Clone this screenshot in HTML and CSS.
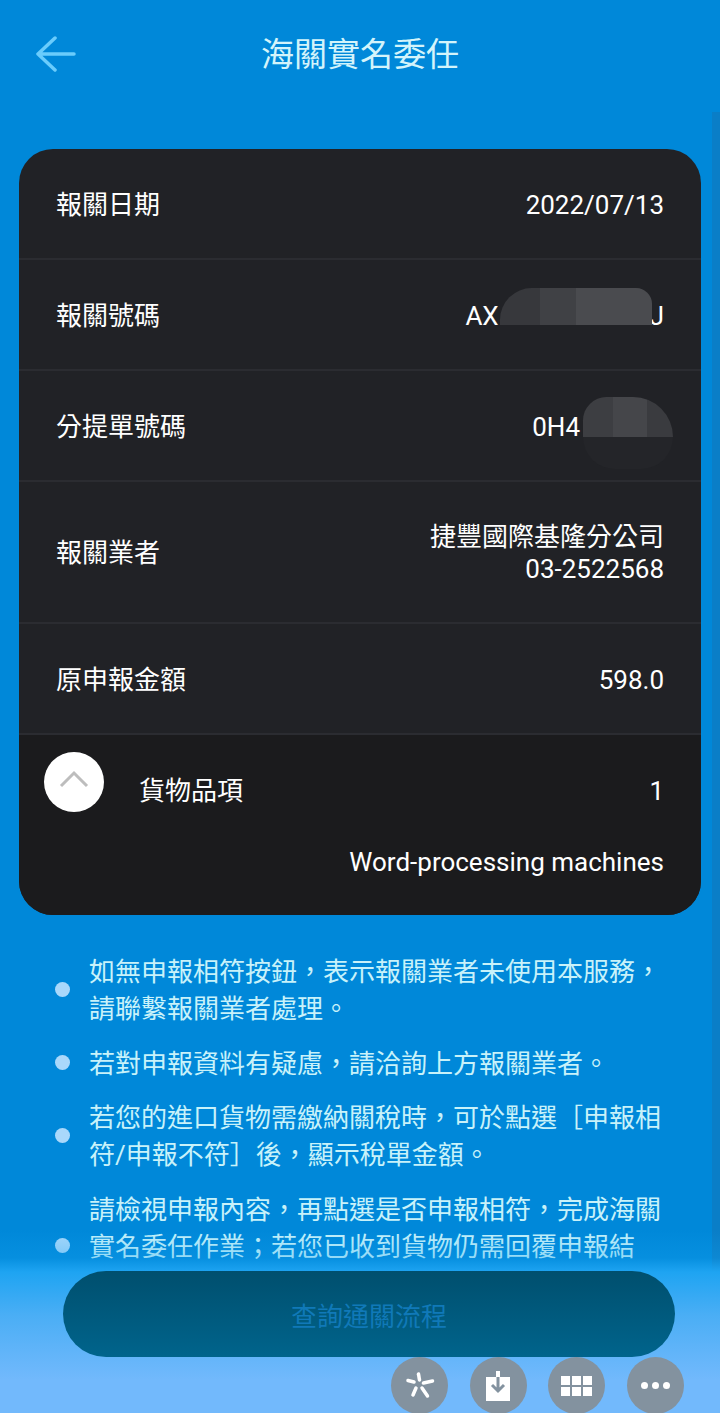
FILE: index.html
```html
<!DOCTYPE html>
<html lang="zh-Hant">
<head>
  <meta charset="UTF-8">
  <title>海關實名委任</title>
  <link rel="stylesheet" href="styles.css">
</head>
<body>
  <div class="page">

    <!-- Header -->
    <header class="topbar">
      <svg class="back-icon" width="42" height="36" viewBox="0 0 42 36" fill="none">
        <path d="M20 2 L3 18 L20 34 M3 18 H39" stroke="#6accfc" stroke-width="3.5" stroke-linecap="round" stroke-linejoin="round"/>
      </svg>
      <h1>海關實名委任</h1>
    </header>

    <div class="scroll-track"></div>

    <!-- Declaration details -->
    <section class="detail-card">
      <div class="row">
        <span>報關日期</span>
        <span>2022/07/13</span>
      </div>
      <div class="row">
        <span>報關號碼</span>
        <span>AX<span class="masked-gap masked-gap-long"></span>J</span>
        <div class="blur-patch blur-one"></div>
      </div>
      <div class="row">
        <span>分提單號碼</span>
        <span class="shift-left">0H4</span>
        <div class="blur-patch blur-two"></div>
        <div class="blur-patch blur-two-low"></div>
      </div>
      <div class="row row-tall">
        <span>報關業者</span>
        <span class="value-stack">捷豐國際基隆分公司<br>03-2522568</span>
      </div>
      <div class="row">
        <span>原申報金額</span>
        <span>598.0</span>
      </div>
      <div class="goods">
        <div class="goods-head">
          <button class="toggle" type="button">
            <svg width="32" height="20" viewBox="0 0 32 20" fill="none">
              <path d="M3 17 L16 4 L29 17" stroke="#bdbdbd" stroke-width="3"/>
            </svg>
          </button>
          <span class="goods-label">貨物品項</span>
          <span>1</span>
        </div>
        <div class="goods-name">Word-processing machines</div>
      </div>
    </section>

    <!-- Notes -->
    <ul class="notes">
      <li>如無申報相符按鈕，表示報關業者未使用本服務，請聯繫報關業者處理。</li>
      <li>若對申報資料有疑慮，請洽詢上方報關業者。</li>
      <li>若您的進口貨物需繳納關稅時，可於點選［申報相符/申報不符］後，顯示稅單金額。</li>
      <li>請檢視申報內容，再點選是否申報相符，完成海關實名委任作業；若您已收到貨物仍需回覆申報結果。</li>
    </ul>

    <!-- Bottom fade, button and floating tools -->
    <div class="bottom-fade"></div>
    <button class="flow-btn" type="button">查詢通關流程</button>
    <div class="float-tools">
      <div class="tool">
        <svg width="30" height="30" viewBox="0 0 30 30" fill="none" stroke="#fff" stroke-width="3.5" stroke-linecap="round">
          <path d="M13.5 3 L14.5 9"/>
          <path d="M3 9.5 L9 11"/>
          <path d="M18.5 12 L27.5 10"/>
          <path d="M11 17 L8 24"/>
          <path d="M17 17 L22.5 25"/>
        </svg>
      </div>
      <div class="tool">
        <svg width="28" height="32" viewBox="0 0 28 32">
          <path d="M2 7 H12 V1 H16 V7 H26 V31 H2 Z" fill="#fff"/>
          <path d="M14 7 V20 M8 15 L14 21 L20 15" fill="none" stroke="#83929f" stroke-width="3"/>
        </svg>
      </div>
      <div class="tool">
        <div class="dots-grid">
          <i></i><i></i><i></i><i></i><i></i><i></i>
        </div>
      </div>
      <div class="tool">
        <div class="dots-row">
          <i></i><i></i><i></i>
        </div>
      </div>
    </div>

  </div>
</body>
</html>
```

FILE: styles.css
```css
* {
  box-sizing: border-box;
  margin: 0;
  padding: 0;
}

body {
  font-family: Roboto, "Noto Sans CJK TC", sans-serif;
  background: #0088d9;
}

.page {
  position: relative;
  width: 720px;
  height: 1413px;
  overflow: hidden;
  padding-top: 149px;
  background: #0088d9;
}

/* Header */
.topbar {
  position: absolute;
  top: 0;
  left: 0;
  width: 100%;
  height: 110px;
  display: flex;
  align-items: center;
  justify-content: center;
}

.topbar h1 {
  font-size: 33px;
  font-weight: 400;
  line-height: 40px;
  color: #d3f4fb;
}

.back-icon {
  position: absolute;
  left: 35px;
  top: 36px;
}

.scroll-track {
  position: absolute;
  top: 112px;
  right: 0;
  bottom: 0;
  width: 8px;
  background: #0a7ec7;
}

/* Card */
.detail-card {
  position: relative;
  width: 682px;
  height: 766px;
  margin-left: 19px;
  border-radius: 34px;
  background: #212226;
  color: #ffffff;
  overflow: hidden;
  font-size: 26px;
}

.row {
  position: relative;
  height: 111px;
  padding: 2px 37px 0;
  display: flex;
  align-items: center;
  justify-content: space-between;
  border-bottom: 2px solid #2b2c31;
  line-height: 32px;
}

.row-tall {
  height: 142px;
}

.value-stack {
  text-align: right;
}

.masked-gap {
  display: inline-block;
}

.masked-gap-long {
  width: 151px;
}

.shift-left {
  margin-right: 84px;
}

.blur-patch {
  position: absolute;
}

.blur-one {
  left: 481px;
  top: 28px;
  width: 152px;
  height: 37px;
  border-radius: 32px 16px 0 0;
  background: linear-gradient(90deg, #37383c 0, #37383c 40px, #404145 40px, #404145 76px, #4a4b4f 76px, #4a4b4f 100%);
}

.blur-two {
  left: 564px;
  top: 26px;
  width: 90px;
  height: 40px;
  border-radius: 26px 44px 0 0;
  background: linear-gradient(90deg, #3d3e42 0, #3d3e42 30px, #45464a 30px, #45464a 64px, #3a3b3f 64px, #3a3b3f 100%);
}

.blur-two-low {
  left: 564px;
  top: 66px;
  width: 90px;
  height: 32px;
  border-radius: 0 0 44px 44px;
  background: #242529;
}

/* Goods section */
.goods {
  height: 181px;
  background: #1b1b1d;
  position: relative;
  line-height: 32px;
}

.goods-head {
  height: 112px;
  padding: 0 37px 0 120px;
  display: flex;
  align-items: center;
  justify-content: space-between;
}

.toggle {
  position: absolute;
  left: 25px;
  top: 17px;
  width: 60px;
  height: 60px;
  border: none;
  border-radius: 50%;
  background: #ffffff;
  display: flex;
  align-items: center;
  justify-content: center;
  padding-bottom: 6px;
}

.goods-name {
  padding: 0 37px;
  margin-top: -1px;
  text-align: right;
}

/* Notes */
.notes {
  list-style: none;
  margin-top: 39px;
  padding: 0 56px 0 89px;
  font-size: 26px;
  line-height: 37px;
  color: #c8f2fa;
}

.notes li {
  position: relative;
  margin-bottom: 17.5px;
}

.notes li::before {
  content: "";
  position: absolute;
  left: -34px;
  top: calc(50% - 9px);
  width: 15px;
  height: 15px;
  border-radius: 50%;
  background: #a9d8fb;
}

/* Bottom */
.bottom-fade {
  position: absolute;
  left: 0;
  right: 0;
  top: 1230px;
  bottom: 0;
  background: linear-gradient(180deg, rgba(10, 151, 230, 0) 0, rgba(20, 160, 238, 0.3) 28px, #1ea4f2 42px, #4aaef5 85px, #72b9fc 150px);
}

.flow-btn {
  position: absolute;
  left: 63px;
  top: 1271px;
  width: 612px;
  height: 86px;
  border: none;
  border-radius: 43px;
  background: linear-gradient(180deg, #004f6e 0, #00648c 100%);
  color: #1079b8;
  font-family: inherit;
  font-size: 26px;
}

.float-tools {
  position: absolute;
  left: 391px;
  top: 1357px;
  display: flex;
  gap: 21.7px;
}

.tool {
  width: 57px;
  height: 57px;
  border-radius: 50%;
  background: #83929f;
  display: flex;
  align-items: center;
  justify-content: center;
}

.dots-grid {
  display: grid;
  grid-template-columns: repeat(3, 9px);
  grid-auto-rows: 9px;
  gap: 2px;
}

.dots-grid i {
  background: #ffffff;
}

.dots-row {
  display: flex;
  gap: 4px;
}

.dots-row i {
  width: 7px;
  height: 7px;
  border-radius: 50%;
  background: #ffffff;
}
```
